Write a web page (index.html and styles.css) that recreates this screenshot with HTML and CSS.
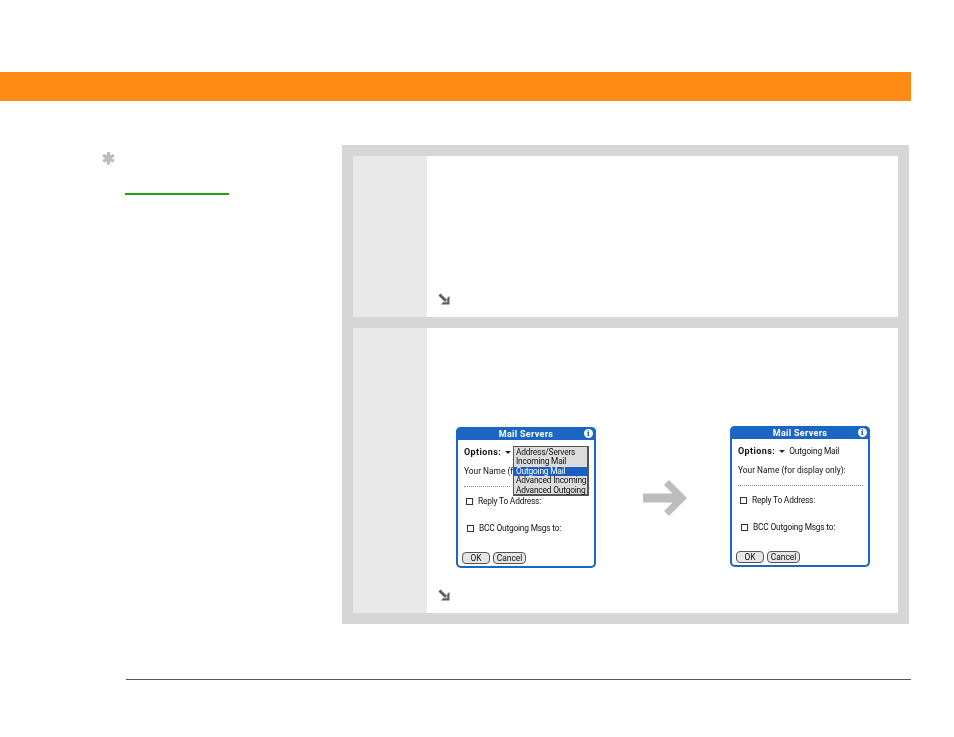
FILE: index.html
```html
<!DOCTYPE html>
<html lang="en">
<head>
<meta charset="utf-8">
<title>Mail Servers</title>
<link rel="stylesheet" href="styles.css">
</head>
<body>
<div class="band"></div>
<main class="content">
  <aside class="side">
    <svg class="star" width="13" height="13" viewBox="0 0 13 13"><path d="M6.5 0V12.5M1.1 3.1L11.9 9.4M1.1 9.4L11.9 3.1" fill="none" stroke="#bcbcbc" stroke-width="3.4"/></svg>
    <div class="rule-green"></div>
  </aside>
  <section class="panel">
    <div class="step step-a">
      <div class="num"></div>
      <div class="body">
        <svg class="go" width="12" height="12" viewBox="0 0 12 12"><path d="M1.5 1.5L8 8" stroke="#5f5f5f" stroke-width="3" fill="none"/><path d="M11.5 3V11.5H3L5 9.2H9.2V5Z" fill="#5f5f5f"/></svg>
      </div>
    </div>
    <div class="step step-b">
      <div class="num"></div>
      <div class="body">
        <div class="shots">
          <div class="palm">
            <div class="title">Mail Servers<span class="info">i</span></div>
            <div class="form">
              <div class="opts"><b>Options:</b><i class="tri"></i></div>
              <div class="name">Your Name (f</div>
              <div class="dots short"></div>
              <div class="chk c1"><i class="box"></i>Reply To Address:</div>
              <div class="chk c2"><i class="box"></i>BCC Outgoing Msgs to:</div>
              <div class="btns"><span class="btn ok">OK</span><span class="btn cancel">Cancel</span></div>
            </div>
            <ul class="menu">
              <li>Address/Servers</li>
              <li>Incoming Mail</li>
              <li class="sel">Outgoing Mail</li>
              <li>Advanced Incoming</li>
              <li>Advanced Outgoing</li>
            </ul>
          </div>
          <svg class="big" width="44" height="36" viewBox="0 0 44 36"><path d="M0 13.5H29.5L21 5L26 0L44 18L26 36L21 31L29.5 22.5H0Z" fill="#bdbdbd"/></svg>
          <div class="palm second">
            <div class="title">Mail Servers<span class="info">i</span></div>
            <div class="form">
              <div class="opts"><b>Options:</b><i class="tri"></i><span>Outgoing Mail</span></div>
              <div class="name">Your Name (for display only):</div>
              <div class="dots"></div>
              <div class="chk c1"><i class="box"></i>Reply To Address:</div>
              <div class="chk c2"><i class="box"></i>BCC Outgoing Msgs to:</div>
              <div class="btns"><span class="btn ok">OK</span><span class="btn cancel">Cancel</span></div>
            </div>
          </div>
        </div>
        <svg class="go" width="12" height="12" viewBox="0 0 12 12"><path d="M1.5 1.5L8 8" stroke="#5f5f5f" stroke-width="3" fill="none"/><path d="M11.5 3V11.5H3L5 9.2H9.2V5Z" fill="#5f5f5f"/></svg>
      </div>
    </div>
  </section>
</main>
<div class="rule-foot"></div>
</body>
</html>
```
FILE: styles.css
```css
* { box-sizing: border-box; }
html, body { margin: 0; padding: 0; background: #fff; }
body { font-family: "DejaVu Sans", sans-serif; height: 737px; overflow: hidden; }

.band { width: 911px; height: 29px; margin-top: 72px; background: #ff8a14; }

.content { display: flex; margin-top: 44px; height: 479px; }
.side { width: 342px; padding: 7px 0 0 102px; flex: none; }
.star { display: block; }
.rule-green { width: 104px; height: 1.5px; margin: 28px 0 0 23px; background: #1fa30a; }

.panel { width: 567px; flex: none; background: #d6d6d6; padding: 11px; display: flex; flex-direction: column; gap: 11px; }
.step { display: flex; background: #fff; }
.step-a { height: 161px; }
.step-b { height: 286px; }
.num { width: 74px; flex: none; background: #e9e9e9; }
.body { flex: 1; display: flex; flex-direction: column; justify-content: flex-end; padding: 0 0 12px 11px; }
.go { display: block; }

.shots { display: flex; align-items: center; margin: 0 0 21px 18px; }
.big { margin: 0 43px 0 47px; flex: none; }

.palm { position: relative; width: 140px; height: 141px; border: 2px solid #1a66c2; border-top: 0; border-radius: 5px; background: #fff; color: #111; font-family: Roboto, sans-serif; font-size: 8.4px; line-height: 10px; filter: blur(0.3px); flex: none; }
.second { margin-top: -2px; }
.title { position: relative; margin: 0 -2px; height: 13px; background: #1a66c2; border-radius: 5px 5px 0 0; color: #fff; font-weight: bold; font-size: 9px; letter-spacing: 0.3px; line-height: 14px; text-align: center; }
.info { position: absolute; right: 3px; top: 2px; width: 9px; height: 9px; border-radius: 50%; background: #fff; color: #1a66c2; font: bold 8px/9px "DejaVu Serif", serif; }

.form { display: flex; flex-direction: column; padding: 0 4px 0 6px; height: 126px; white-space: nowrap; }
.opts { display: flex; align-items: center; margin-top: 7px; height: 10px; }
.opts b { font-weight: bold; font-size: 9px; letter-spacing: 0.4px; }
.opts span { margin-left: 4px; letter-spacing: -0.15px; }
.tri { width: 0; height: 0; margin-left: 4px; border: 3.5px solid transparent; border-top: 3.5px solid #222; border-bottom: 0; }
.name { margin-top: 9px; height: 10px; }
.dots { margin-top: 10px; border-top: 1px dotted #888; width: 125px; }
.dots.short { width: 46px; }
.chk { display: flex; align-items: center; height: 12px; letter-spacing: -0.2px; }
.c1 { margin-top: 8px; padding-left: 2px; }
.c2 { margin-top: 15px; padding-left: 3px; }
.box { width: 7px; height: 7px; border: 1px solid #333; margin-right: 5px; flex: none; }
.btns { display: flex; gap: 3px; margin-top: auto; margin-bottom: 2px; margin-left: -2px; }
.btn { height: 12px; border: 1px solid #555; border-radius: 4px; background: #e6e6e6; line-height: 10px; text-align: center; }
.ok { width: 28px; }
.cancel { width: 33px; }

.menu { position: absolute; left: 55px; top: 19px; width: 76px; height: 50px; margin: 0; padding: 1px 1px; list-style: none; background: #dcdcdc; border: 1px solid #555; border-right-width: 2px; border-bottom-width: 2px; white-space: nowrap; letter-spacing: -0.2px; }
.menu li { height: 9.4px; line-height: 9.4px; padding-left: 1px; }
.menu .sel { background: #1a5fbf; color: #fff; margin: 0 -1px; padding-left: 2px; }

.rule-foot { width: 785px; height: 1px; margin: 55px 0 0 126px; background: #4a5a66; }
```
